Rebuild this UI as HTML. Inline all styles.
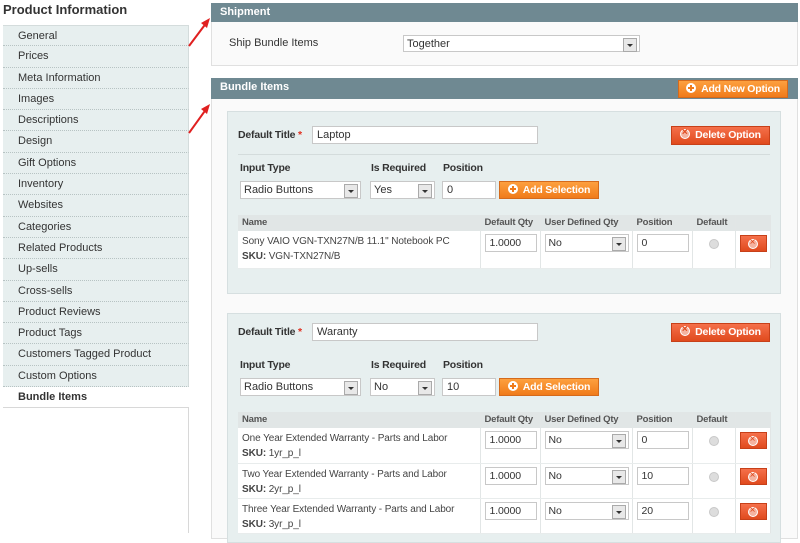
<!DOCTYPE html>
<html><head><meta charset="utf-8"><style>
*{margin:0;padding:0;box-sizing:border-box}
body{width:800px;height:533px;overflow:hidden;background:#fff;font-family:"Liberation Sans",Arial,sans-serif;font-size:11px;color:#2f2f2f;position:relative}
.a{position:absolute;white-space:nowrap}
.side{left:3px;width:186px;top:25px}
.tab{height:21.3px;line-height:21px;padding-left:15px;background:#e7efef;border-bottom:1px dotted #b7c3c3;color:#333;font-size:11px;border-right:1px solid #d4dcdc}
.tab.on{background:#fff;font-weight:bold;border-bottom:1px solid #d8d8d8;border-right:none}
.hd{background:#6f8992;color:#fff;font-weight:bold;font-size:11px;padding-left:9px;line-height:19px}
.inp{background:#fff;border:1px solid #c8c8c8;height:18px;line-height:16px;padding-left:4px;font-size:11px;color:#333}
.sel{background:#fff;border:1px solid #c8c8c8;height:18px;line-height:16px;padding-left:3px;font-size:11px;color:#333}
.sel:after{content:"";position:absolute;right:2px;top:2px;width:12px;height:12px;background:#e8e8e8 ;border:1px solid #aaa}
.sel:before{content:"";position:absolute;right:6px;top:8px;border-left:3px solid transparent;border-right:3px solid transparent;border-top:3px solid #333;z-index:2}
.btn{color:#fff;font-weight:bold;font-size:10.5px;text-align:center;line-height:17px;border:1px solid #d46a1c;background:linear-gradient(#fda03f,#f07b1a);letter-spacing:-0.2px}
.red{border-color:#c74019;background:linear-gradient(#f5704a,#e04a1d)}
.ic{display:inline-block;width:10px;height:10px;border-radius:50%;background:#fff;vertical-align:-1px;margin-right:5px;position:relative}
.ic.p:before{content:"";position:absolute;left:2px;top:4px;width:6px;height:2px;background:#f07b1a}
.ic.p:after{content:"";position:absolute;left:4px;top:2px;width:2px;height:6px;background:#f07b1a}
.ic.x{background:#f4b3a0;border:1.5px solid #fff}
.ic.x:before{content:"×";position:absolute;left:0;top:-5px;width:7px;text-align:center;color:#e04a1d;font-size:10px;line-height:16px}
.box{background:#e7efef;border:1px solid #d6dfe0}
.lbl{font-weight:bold;color:#333;font-size:10.5px;letter-spacing:-0.2px}
table{border-collapse:collapse;table-layout:fixed;background:#fff}
td,th{border-right:1px solid #e2e6e6;vertical-align:top;text-align:left;overflow:hidden;white-space:nowrap}
th{background:#e1e6e6;height:16px;line-height:16px;padding-left:4px;font-weight:bold;color:#555;font-size:9.5px;letter-spacing:-0.2px}
td{padding:3px 3px 0 4px;line-height:15px;border-bottom:1px solid #e8ecec;color:#444;font-size:10px;letter-spacing:-0.1px}
td .inp,td .sel{position:relative;width:100%;font-size:10.5px}
.rad{display:block;margin:5px auto 0;width:10px;height:10px;border-radius:50%;background:#ddd;border:1px solid #c8c8c8}
.del{width:27px;height:17px;margin-top:1px;text-align:center;border:1px solid #c74019;background:linear-gradient(#f5704a,#e04a1d)}
.del .ic{margin:3px 0 0 0}
</style></head><body>

<div class="a" style="left:3px;top:2px;font-size:13px;font-weight:bold;color:#333">Product Information</div>
<div class="a side">
<div class="tab" style="border-top:1px solid #d4dcdc">General</div><div class="tab">Prices</div><div class="tab">Meta Information</div><div class="tab">Images</div><div class="tab">Descriptions</div><div class="tab">Design</div><div class="tab">Gift Options</div><div class="tab">Inventory</div><div class="tab">Websites</div><div class="tab">Categories</div><div class="tab">Related Products</div><div class="tab">Up-sells</div><div class="tab">Cross-sells</div><div class="tab">Product Reviews</div><div class="tab">Product Tags</div><div class="tab">Customers Tagged Product</div><div class="tab">Custom Options</div><div class="tab on">Bundle Items</div>
</div>
<div class="a" style="left:188px;top:408px;width:1px;height:125px;background:#d8d8d8"></div>

<svg class="a" style="left:185px;top:15px" width="30" height="125">
<line x1="4" y1="31" x2="22" y2="7" stroke="#e02020" stroke-width="2"/><polygon points="25,3 16,8 22,13" fill="#e02020"/>
<line x1="4" y1="118" x2="22" y2="93" stroke="#e02020" stroke-width="2"/><polygon points="25,89 16,94 22,99" fill="#e02020"/>
</svg>

<div class="a hd" style="left:211px;top:3px;width:587px;height:19px">Shipment</div>
<div class="a" style="left:211px;top:22px;width:587px;height:44px;background:#fafafa;border:1px solid #e0e0e0;border-top:none"></div>
<div class="a" style="left:229px;top:37px;color:#333">Ship Bundle Items</div>
<div class="a sel" style="left:403px;top:35px;width:237px;height:17px">Together</div>

<div class="a hd" style="left:211px;top:78px;width:587px;height:21px;line-height:19px">Bundle Items</div>
<div class="a btn" style="left:678px;top:80px;width:110px;height:18px"><span class="ic p"></span>Add New Option</div>
<div class="a" style="left:211px;top:99px;width:587px;height:440px;background:#fafafa;border:1px solid #e0e0e0;border-top:none"></div>

<!-- option 1 -->
<div class="a box" style="left:227px;top:111px;width:554px;height:183px"></div>
<div class="a lbl" style="left:238px;top:129px">Default Title <span style="color:#e03020">*</span></div>
<div class="a inp" style="left:312px;top:126px;width:226px">Laptop</div>
<div class="a btn red" style="left:671px;top:126px;width:99px;height:19px"><span class="ic x"></span>Delete Option</div>
<div class="a" style="left:238px;top:154px;width:532px;height:1px;background:#d4dcdc"></div>
<div class="a lbl" style="left:240px;top:162px">Input Type</div>
<div class="a lbl" style="left:371px;top:162px">Is Required</div>
<div class="a lbl" style="left:443px;top:162px">Position</div>
<div class="a sel" style="left:240px;top:181px;width:121px">Radio Buttons</div>
<div class="a sel" style="left:370px;top:181px;width:65px">Yes</div>
<div class="a inp" style="left:442px;top:181px;width:54px">0</div>
<div class="a btn" style="left:499px;top:181px;width:100px;height:18px"><span class="ic p"></span>Add Selection</div>
<table class="a" style="left:238px;top:215px;width:532px">
<colgroup><col style="width:242px"><col style="width:60px"><col style="width:92px"><col style="width:60px"><col style="width:43px"><col style="width:35px"></colgroup>
<tr><th>Name</th><th>Default Qty</th><th>User Defined Qty</th><th>Position</th><th>Default</th><th></th></tr>
<tr style="height:37px"><td>Sony VAIO VGN-TXN27N/B 11.1" Notebook PC<br><b>SKU:</b> VGN-TXN27N/B</td><td><div class="inp">1.0000</div></td><td><div class="sel">No</div></td><td><div class="inp">0</div></td><td><span class="rad"></span></td><td><div class="del"><span class="ic x"></span></div></td></tr>
</table>

<!-- option 2 -->
<div class="a box" style="left:227px;top:313px;width:554px;height:230px"></div>
<div class="a lbl" style="left:238px;top:326px">Default Title <span style="color:#e03020">*</span></div>
<div class="a inp" style="left:312px;top:323px;width:226px">Waranty</div>
<div class="a btn red" style="left:671px;top:323px;width:99px;height:19px"><span class="ic x"></span>Delete Option</div>
<div class="a lbl" style="left:240px;top:359px">Input Type</div>
<div class="a lbl" style="left:371px;top:359px">Is Required</div>
<div class="a lbl" style="left:443px;top:359px">Position</div>
<div class="a sel" style="left:240px;top:378px;width:121px">Radio Buttons</div>
<div class="a sel" style="left:370px;top:378px;width:65px">No</div>
<div class="a inp" style="left:442px;top:378px;width:54px">10</div>
<div class="a btn" style="left:499px;top:378px;width:100px;height:18px"><span class="ic p"></span>Add Selection</div>
<table class="a" style="left:238px;top:412px;width:532px">
<colgroup><col style="width:242px"><col style="width:60px"><col style="width:92px"><col style="width:60px"><col style="width:43px"><col style="width:35px"></colgroup>
<tr><th>Name</th><th>Default Qty</th><th>User Defined Qty</th><th>Position</th><th>Default</th><th></th></tr>
<tr style="height:35px"><td>One Year Extended Warranty - Parts and Labor<br><b>SKU:</b> 1yr_p_l</td><td><div class="inp">1.0000</div></td><td><div class="sel">No</div></td><td><div class="inp">0</div></td><td><span class="rad"></span></td><td><div class="del"><span class="ic x"></span></div></td></tr>
<tr style="height:35px"><td>Two Year Extended Warranty - Parts and Labor<br><b>SKU:</b> 2yr_p_l</td><td><div class="inp">1.0000</div></td><td><div class="sel">No</div></td><td><div class="inp">10</div></td><td><span class="rad"></span></td><td><div class="del"><span class="ic x"></span></div></td></tr>
<tr style="height:35px"><td>Three Year Extended Warranty - Parts and Labor<br><b>SKU:</b> 3yr_p_l</td><td><div class="inp">1.0000</div></td><td><div class="sel">No</div></td><td><div class="inp">20</div></td><td><span class="rad"></span></td><td><div class="del"><span class="ic x"></span></div></td></tr>
</table>
</body></html>
